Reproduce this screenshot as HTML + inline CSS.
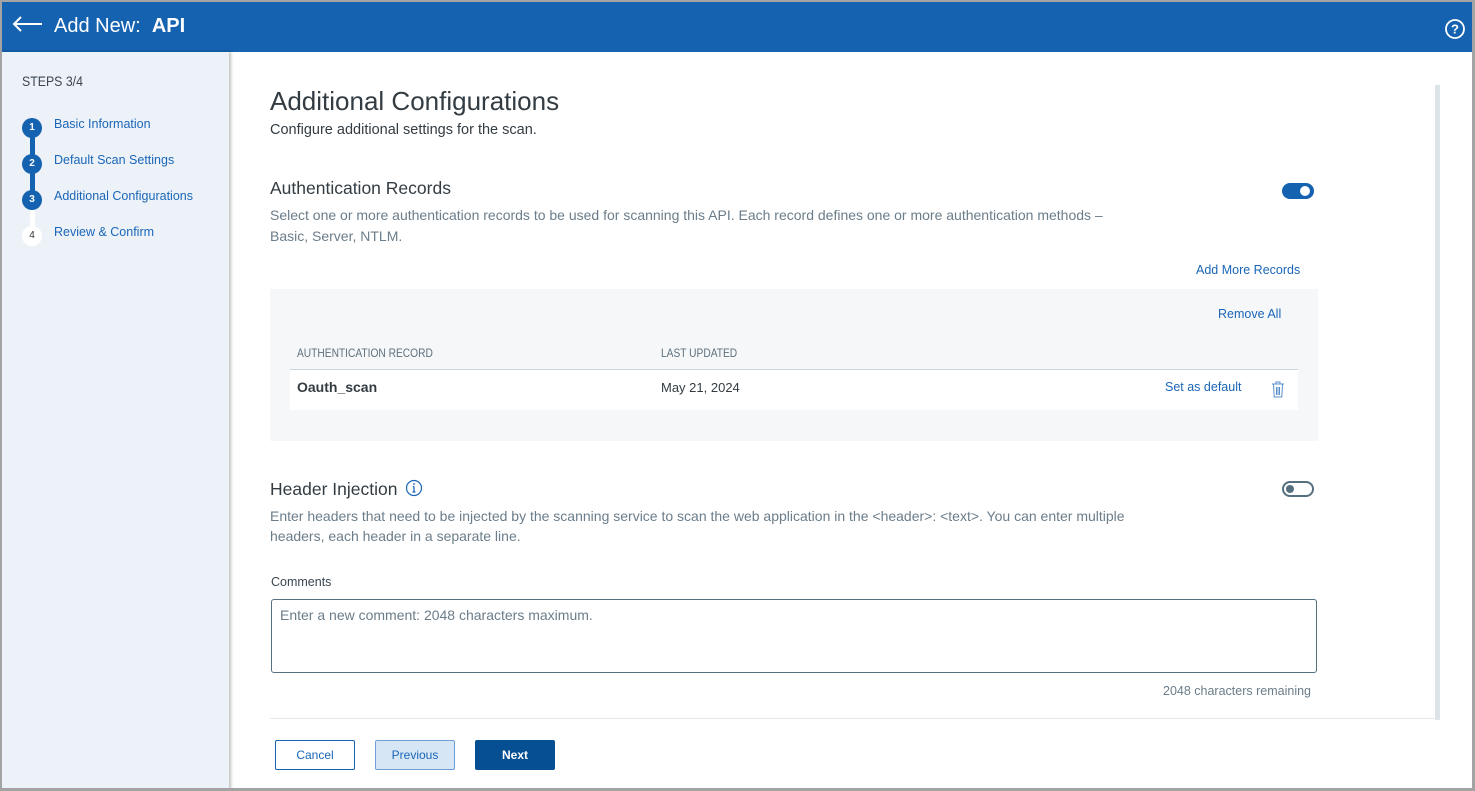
<!DOCTYPE html>
<html><head><meta charset="utf-8"><style>
*{box-sizing:border-box;margin:0;padding:0}
body{width:1475px;height:791px;overflow:hidden;font-family:"Liberation Sans",sans-serif;background:#fff;position:relative}
.frame{position:absolute;left:0;top:0;width:1475px;height:791px;border:2px solid #a3a3a3;border-right-width:3px;border-bottom-width:3px;pointer-events:none;z-index:10}
.hdr{position:absolute;left:0;top:0;width:1475px;height:52px;background:#1562b0;color:#fff}
.side{position:absolute;left:0;top:52px;width:229px;height:739px;background:#edf2f9;box-shadow:2px 0 3px rgba(0,0,0,.25)}
.a{position:absolute;white-space:nowrap}
.link{color:#1a66b8;font-size:12.5px}
.dot{position:absolute;width:20px;height:20px;border-radius:50%;background:#1562b0;color:#fff;font-size:10px;font-weight:bold;text-align:center;line-height:20px}
.gray{color:#6b7d8a;font-size:14px}
.tit{color:#333c42;font-size:17.5px}
.cond{font-family:"Liberation Sans Narrow","Liberation Sans",sans-serif;font-size:12px;color:#5e707c;transform:scaleX(.85);transform-origin:left}
.btn{position:absolute;top:740px;height:30px;width:80px;font-size:12px;text-align:center;line-height:28px;border-radius:2px}
</style></head><body>
<div class="hdr">
<svg class="a" style="left:12px;top:16px" width="32" height="16" viewBox="0 0 32 16"><path d="M9 1L2 8l7 7M2 8h28" stroke="#fff" stroke-width="2" fill="none"/></svg>
<div class="a" style="left:54px;top:15px;font-size:20px">Add New: &nbsp;<b>API</b></div>
<svg class="a" style="left:1444px;top:18px" width="22" height="22" viewBox="0 0 22 22"><circle cx="11" cy="11" r="9" stroke="#fff" stroke-width="1.8" fill="none"/><text x="11" y="15.5" text-anchor="middle" fill="#fff" font-size="13" font-family="Liberation Sans" font-weight="bold">?</text></svg>
</div>
<div class="side">
<div class="a" style="left:22px;top:21px;font-size:14px;color:#3b4650;transform:scaleX(.88);transform-origin:left">STEPS 3/4</div>
<div class="a" style="left:30px;top:80px;width:5px;height:72px;background:#1562b0"></div>
<div class="a" style="left:30px;top:152px;width:5px;height:28px;background:#fff"></div>
<div class="dot" style="left:22px;top:66px">1</div>
<div class="dot" style="left:22px;top:102px">2</div>
<div class="dot" style="left:22px;top:138px">3</div>
<div class="dot" style="left:22px;top:174px;background:#fff;color:#333;font-weight:normal">4</div>
<div class="a link" style="left:54px;top:65px">Basic Information</div>
<div class="a link" style="left:54px;top:101px">Default Scan Settings</div>
<div class="a link" style="left:54px;top:137px">Additional Configurations</div>
<div class="a link" style="left:54px;top:173px">Review &amp; Confirm</div>
</div>
<div class="a" style="left:1435px;top:85px;width:5px;height:635px;background:#dde4e8"></div>
<div class="a" style="left:270px;top:86px;font-size:26px;color:#333c42">Additional Configurations</div>
<div class="a" style="left:270px;top:122px;font-size:14.5px;color:#333c42">Configure additional settings for the scan.</div>
<div class="a tit" style="left:270px;top:178px">Authentication Records</div>
<div class="a" style="left:1282px;top:183px;width:32px;height:16px;border-radius:8px;background:#1562b0"><div class="a" style="left:18px;top:3px;width:10px;height:10px;border-radius:50%;background:#fff"></div></div>
<div class="a gray" style="left:270px;top:205px;line-height:21px;white-space:normal;width:860px">Select one or more authentication records to be used for scanning this API. Each record defines one or more authentication methods – Basic, Server, NTLM.</div>
<div class="a link" style="left:1196px;top:263px">Add More Records</div>
<div class="a" style="left:270px;top:289px;width:1048px;height:152px;background:#f5f7f9"></div>
<div class="a link" style="left:1218px;top:307px">Remove All</div>
<div class="a cond" style="left:297px;top:346px">AUTHENTICATION RECORD</div>
<div class="a cond" style="left:661px;top:346px">LAST UPDATED</div>
<div class="a" style="left:290px;top:369px;width:1008px;height:41px;background:#fff;border-top:1px solid #cdd5da"></div>
<div class="a" style="left:297px;top:379px;font-size:14px;font-weight:bold;color:#333c42">Oauth_scan</div>
<div class="a" style="left:661px;top:380px;font-size:13px;color:#333c42">May 21, 2024</div>
<div class="a link" style="left:1165px;top:380px">Set as default</div>
<svg class="a" style="left:1271px;top:381px" width="14" height="17" viewBox="0 0 14 17"><path d="M1 3h12M5 3V1h4v2M2.5 3.5l.7 12.5h7.6l.7-12.5M5.5 6v8M7 6v8M8.5 6v8" stroke="#5b8fcc" stroke-width="1" fill="none"/></svg>
<div class="a tit" style="left:270px;top:479px">Header Injection</div>
<svg class="a" style="left:405px;top:479px" width="18" height="18" viewBox="0 0 18 18"><circle cx="9" cy="9" r="7.5" stroke="#1a66b8" stroke-width="1.2" fill="none"/><path d="M9 7.5v5.5M7.5 13h3M7.8 7.5H9" stroke="#1a66b8" stroke-width="1.3" fill="none"/><circle cx="9" cy="5" r="0.9" fill="#1a66b8"/></svg>
<div class="a" style="left:1282px;top:481px;width:32px;height:16px;border-radius:8px;border:2px solid #556f7e;background:#fff"><div class="a" style="left:2px;top:2px;width:8px;height:8px;border-radius:50%;background:#556f7e"></div></div>
<div class="a gray" style="left:270px;top:506px;line-height:20px;white-space:normal;width:880px">Enter headers that need to be injected by the scanning service to scan the web application in the &lt;header&gt;: &lt;text&gt;. You can enter multiple headers, each header in a separate line.</div>
<div class="a" style="left:271px;top:575px;font-size:12.5px;color:#3b4650">Comments</div>
<div class="a" style="left:271px;top:599px;width:1046px;height:74px;border:1px solid #556f7e;border-radius:3px"></div>
<div class="a gray" style="left:280px;top:607px">Enter a new comment: 2048 characters maximum.</div>
<div class="a" style="left:1163px;top:684px;font-size:12.5px;color:#6b7d8a">2048 characters remaining</div>
<div class="a" style="left:270px;top:718px;width:1170px;height:1px;background:#e6e9eb"></div>
<div class="btn" style="left:275px;border:1px solid #1562b0;color:#1a66b8">Cancel</div>
<div class="btn" style="left:375px;border:1px solid #6d9fd6;background:#d7e6f5;color:#1a66b8">Previous</div>
<div class="btn" style="left:475px;background:#074f93;color:#fff;font-weight:bold;border:1px solid #074f93">Next</div>
<div class="frame"></div>
</body></html>
